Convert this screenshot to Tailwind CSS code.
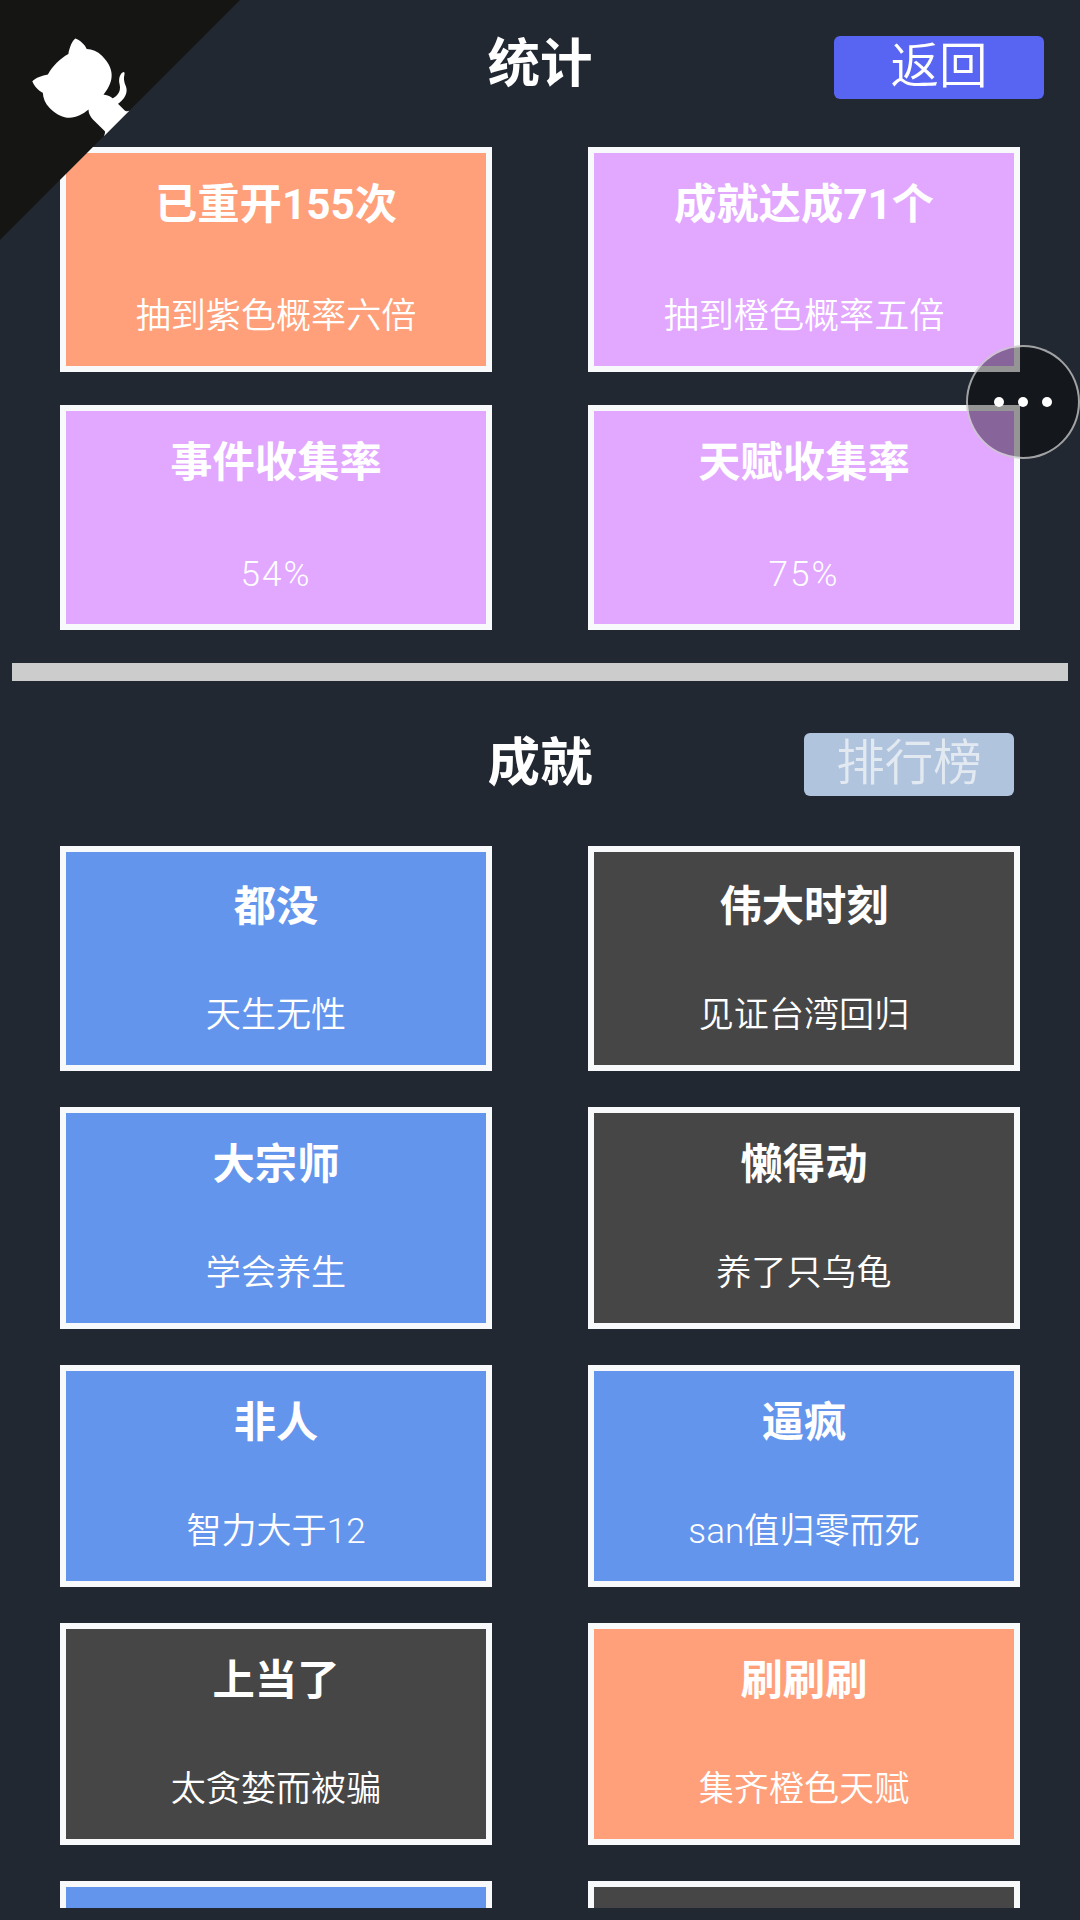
<!DOCTYPE html>
<html lang="zh-CN">
<head>
    <meta charset="UTF-8">
    <meta name="viewport" content="width=device-width, initial-scale=1.0">
    <title>统计</title>
    <script src="https://cdn.jsdelivr.net/npm/@tailwindcss/browser@4"></script>
</head>
<body class="bg-[#222831] font-['Roboto','Noto_Sans_CJK_SC',sans-serif] text-white">
    <div class="relative w-[1080px] h-[1920px] overflow-hidden">
        <!-- github corner -->
        <a href="#" class="absolute top-0 left-0 z-10">
            <svg width="240" height="240" viewBox="0 0 250 250" class="fill-[#151513] text-white -scale-x-100">
                <path d="M0,0 L115,115 L130,115 L142,142 L250,250 L250,0 Z"></path>
                <path d="M128.3,109.0 C113.8,99.7 119.0,89.6 119.0,89.6 C122.0,82.7 120.5,78.6 120.5,78.6 C119.2,72.0 123.4,76.3 123.4,76.3 C127.3,80.9 125.5,87.3 125.5,87.3 C122.9,97.6 130.6,101.9 134.4,103.2" fill="currentColor"></path>
                <path d="M115.0,115.0 C114.9,115.1 118.7,116.5 119.8,115.4 L133.7,101.6 C136.9,99.2 139.9,98.4 142.2,98.6 C133.8,88.0 127.5,74.4 143.8,58.0 C148.5,53.4 154.0,51.2 159.7,51.0 C160.3,49.4 163.2,43.6 171.4,40.1 C171.4,40.1 176.1,42.5 178.8,56.2 C183.1,58.6 187.2,61.8 190.9,65.4 C194.5,69.0 197.7,73.2 200.1,77.6 C213.8,80.2 216.3,84.9 216.3,84.9 C212.7,93.1 206.9,96.0 205.4,96.6 C205.1,102.4 203.0,107.8 198.3,112.5 C181.9,128.9 168.3,122.5 157.7,114.1 C157.9,116.9 156.7,120.9 152.7,124.9 L141.0,136.5 C139.8,137.7 141.6,141.9 141.8,141.8 Z" fill="currentColor"></path>
            </svg>
        </a>

        <!-- floating menu -->
        <div class="absolute top-[345px] right-0 z-10 w-[114px] h-[114px] rounded-full border-2 border-white/60 bg-black/40 flex items-center justify-center gap-[14px]">
            <span class="w-[10px] h-[10px] rounded-full bg-white"></span>
            <span class="w-[10px] h-[10px] rounded-full bg-white"></span>
            <span class="w-[10px] h-[10px] rounded-full bg-white"></span>
        </div>

        <div class="h-[1908px] overflow-hidden">
            <!-- 统计 -->
            <div class="grid grid-cols-[1fr_auto_1fr] items-center h-[135px] pb-[6px]">
                <div></div>
                <h2 class="text-[52.5px] leading-none font-bold">统计</h2>
                <button class="justify-self-end mt-[6px] mr-[36px] w-[210px] h-[63px] rounded-[6px] bg-[#5865f2] text-[48.5px] leading-none font-[350]">返回</button>
            </div>
            <div class="grid grid-cols-2 gap-x-[96px] gap-y-[33px] px-[60px] pt-[12px]">
                <div class="h-[225px] border-[6px] border-[#f8f9fb] bg-[#ffa07a] flex flex-col items-center pt-[31px]">
                    <div class="text-[42.3px] leading-none font-bold">已重开155次</div>
                    <div class="mt-[73px] text-[35.1px] leading-none font-[350]">抽到紫色概率六倍</div>
                </div>
                <div class="h-[225px] border-[6px] border-[#f8f9fb] bg-[#e2a7ff] flex flex-col items-center pt-[31px]">
                    <div class="text-[42.3px] leading-none font-bold">成就达成71个</div>
                    <div class="mt-[73px] text-[35.1px] leading-none font-[350]">抽到橙色概率五倍</div>
                </div>
                <div class="h-[225px] border-[6px] border-[#f8f9fb] bg-[#e2a7ff] flex flex-col items-center pt-[31px]">
                    <div class="text-[42.3px] leading-none font-bold">事件收集率</div>
                    <div class="mt-[73px] text-[35.1px] leading-none font-[350] tracking-[2px]">54%</div>
                </div>
                <div class="h-[225px] border-[6px] border-[#f8f9fb] bg-[#e2a7ff] flex flex-col items-center pt-[31px]">
                    <div class="text-[42.3px] leading-none font-bold">天赋收集率</div>
                    <div class="mt-[73px] text-[35.1px] leading-none font-[350] tracking-[2px]">75%</div>
                </div>
            </div>

            <div class="mx-[12px] mt-[33px] h-[18px] bg-[#cccccc]"></div>

            <!-- 成就 -->
            <div class="grid grid-cols-[1fr_auto_1fr] items-center mt-[51px] h-[64px]">
                <div></div>
                <h2 class="text-[52.5px] leading-none font-bold -mt-[2px]">成就</h2>
                <button class="justify-self-end self-end mr-[66px] w-[210px] h-[63px] rounded-[6px] bg-[#b0c4de] text-[48.5px] leading-none font-[350] text-[#e3e9f1]">排行榜</button>
            </div>
            <div class="grid grid-cols-2 gap-x-[96px] gap-y-[36px] px-[60px] pt-[50px]">
                <div class="h-[225px] border-[6px] border-[#f8f9fb] bg-[#6495ed] flex flex-col items-center pt-[34px]">
                    <div class="text-[42.3px] leading-none font-bold">都没</div>
                    <div class="mt-[70px] text-[35.1px] leading-none font-[350]">天生无性</div>
                </div>
                <div class="h-[225px] border-[6px] border-[#f8f9fb] bg-[#464646] flex flex-col items-center pt-[34px]">
                    <div class="text-[42.3px] leading-none font-bold">伟大时刻</div>
                    <div class="mt-[70px] text-[35.1px] leading-none font-[350]">见证台湾回归</div>
                </div>
                <div class="h-[222px] border-[6px] border-[#f8f9fb] bg-[#6495ed] flex flex-col items-center pt-[31px]">
                    <div class="text-[42.3px] leading-none font-bold">大宗师</div>
                    <div class="mt-[70px] text-[35.1px] leading-none font-[350]">学会养生</div>
                </div>
                <div class="h-[222px] border-[6px] border-[#f8f9fb] bg-[#464646] flex flex-col items-center pt-[31px]">
                    <div class="text-[42.3px] leading-none font-bold">懒得动</div>
                    <div class="mt-[70px] text-[35.1px] leading-none font-[350]">养了只乌龟</div>
                </div>
                <div class="h-[222px] border-[6px] border-[#f8f9fb] bg-[#6495ed] flex flex-col items-center pt-[31px]">
                    <div class="text-[42.3px] leading-none font-bold">非人</div>
                    <div class="mt-[70px] text-[35.1px] leading-none font-[350]">智力大于12</div>
                </div>
                <div class="h-[222px] border-[6px] border-[#f8f9fb] bg-[#6495ed] flex flex-col items-center pt-[31px]">
                    <div class="text-[42.3px] leading-none font-bold">逼疯</div>
                    <div class="mt-[70px] text-[35.1px] leading-none font-[350]">san值归零而死</div>
                </div>
                <div class="h-[222px] border-[6px] border-[#f8f9fb] bg-[#464646] flex flex-col items-center pt-[31px]">
                    <div class="text-[42.3px] leading-none font-bold">上当了</div>
                    <div class="mt-[70px] text-[35.1px] leading-none font-[350]">太贪婪而被骗</div>
                </div>
                <div class="h-[222px] border-[6px] border-[#f8f9fb] bg-[#ffa07a] flex flex-col items-center pt-[31px]">
                    <div class="text-[42.3px] leading-none font-bold">刷刷刷</div>
                    <div class="mt-[70px] text-[35.1px] leading-none font-[350]">集齐橙色天赋</div>
                </div>
                <div class="h-[222px] border-[6px] border-[#f8f9fb] bg-[#6495ed]"></div>
                <div class="h-[222px] border-[6px] border-[#f8f9fb] bg-[#464646]"></div>
            </div>
        </div>
    </div>
</body>
</html>
